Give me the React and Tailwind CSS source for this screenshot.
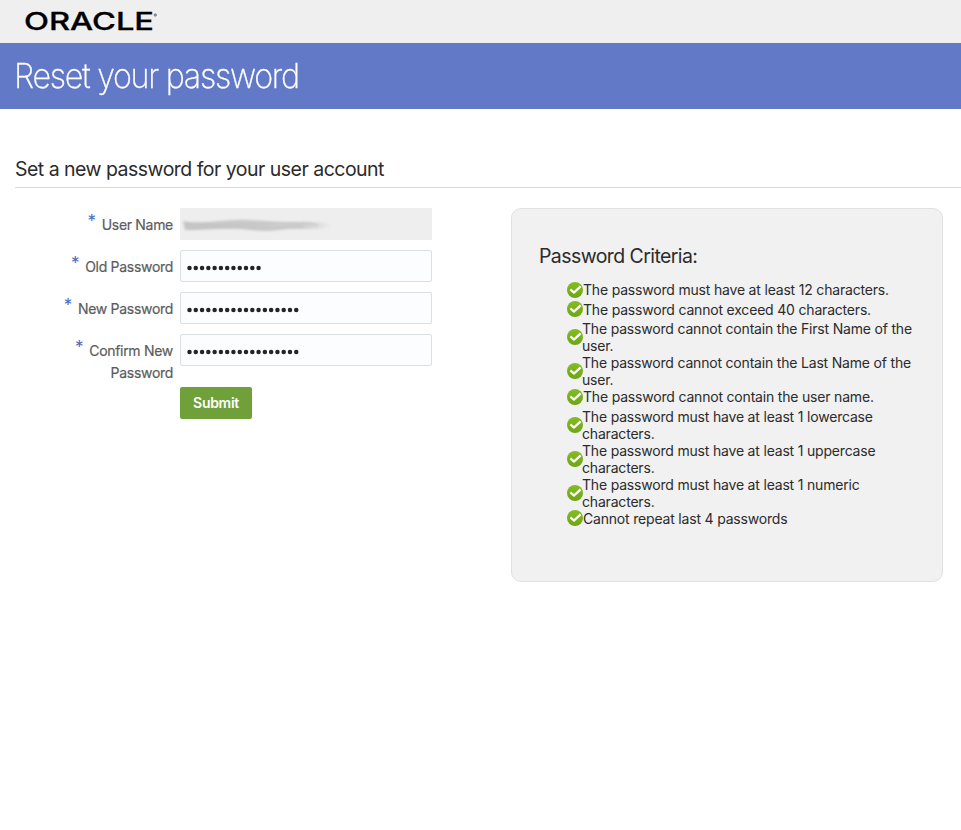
const criteria = [
  { lines: ['The password must have at least 12 characters.'] },
  { lines: ['The password cannot exceed 40 characters.'], raised: true },
  { lines: ['The password cannot contain the First Name of the', 'user.'] },
  { lines: ['The password cannot contain the Last Name of the', 'user.'] },
  { lines: ['The password cannot contain the user name.'], tight: true },
  { lines: ['The password must have at least 1 lowercase', 'characters.'] },
  { lines: ['The password must have at least 1 uppercase', 'characters.'] },
  { lines: ['The password must have at least 1 numeric', 'characters.'] },
  { lines: ['Cannot repeat last 4 passwords'], tight: true, raised: true },
];

function Check({ raised }) {
  return (
    <svg className={raised ? 'mb-[2px] block size-4 shrink-0' : 'block size-4 shrink-0'} viewBox="0 0 16 16">
      <defs>
        <linearGradient id="green" x1="0" y1="0" x2="0" y2="1">
          <stop offset="0" stopColor="#84bd22" />
          <stop offset="1" stopColor="#6ea514" />
        </linearGradient>
      </defs>
      <circle cx="8" cy="8" r="8" fill="url(#green)" />
      <path d="M3.4 7.4 7 10.5 13.6 4.4" fill="none" stroke="#fff" strokeWidth="2.3" />
    </svg>
  );
}

function Label({ children }) {
  return (
    <div className="flex w-[173px] shrink-0 justify-end gap-1.5 text-right text-[14px] leading-[22px] tracking-[-0.3px] text-[#5c5c5c]">
      <span className="mt-[2px] text-[17px] leading-[22px] text-[#4a69bd]">*</span>
      <span className="pt-[6px] [-webkit-text-stroke:0.2px_#5c5c5c]">{children}</span>
    </div>
  );
}

function Dots({ count }) {
  return (
    <div className="flex h-8 w-[252px] items-center rounded-[2px] border border-[#dadfe3] bg-[#fcfdfe] px-[6px] pt-[3px]">
      <svg className="block h-[6px] w-[120px]" viewBox="0 0 120 6" fill="#222428">
        {Array.from({ length: count }, (_, i) => (
          <circle key={i} cx={2.5 + i * 6.28} cy="3" r="2.25" />
        ))}
      </svg>
    </div>
  );
}

function Field({ label, children }) {
  return (
    <div className="flex h-8 gap-[7px]">
      <Label>{label}</Label>
      {children}
    </div>
  );
}

export default function App() {
  return (
    <div className="min-h-[830px] bg-white font-[Inter,sans-serif] text-[#2b2b2b]">
      <header className="h-[43px] bg-[#efefef] pl-6">
        <svg className="block h-[43px] w-[140px]" viewBox="0 0 140 43">
          <text x="0" y="30.3" fontSize="24" fontWeight="500" textLength="130" lengthAdjust="spacingAndGlyphs" fill="#000" stroke="#000" strokeWidth=".3">ORACLE</text>
          <circle cx="131.3" cy="15" r="1.2" fill="#999" stroke="#777" strokeWidth=".8" />
        </svg>
      </header>
      <div className="h-[66px] bg-[#6279c7] pl-[14px]">
        <h1 className="origin-left scale-x-[0.936] whitespace-nowrap text-[34.5px] font-extralight leading-[65px] tracking-[-1.4px] text-white [-webkit-text-stroke:0.3px_#fff]">Reset your password</h1>
      </div>
      <h2 className="ml-[15px] mt-[41px] h-[38px] whitespace-nowrap border-b border-[#d9dcdd] text-[19.5px] leading-[39px] tracking-[-0.52px]">
        Set a new password for your user account
      </h2>
      <div className="mt-5 flex">
        <form className="flex w-[511px] flex-col gap-[10px]">
          <Field label="User Name">
            <div className="flex h-8 w-[252px] items-center bg-[#eeeeef] pt-[6px]">
              <svg className="ml-[3px] block h-[18px] w-[152px] blur-[1px]" viewBox="0 0 152 18">
                <defs>
                  <linearGradient id="smear">
                    <stop offset="0" stopColor="#c6c6c7" />
                    <stop offset=".8" stopColor="#cfcfd0" />
                    <stop offset="1" stopColor="#cfcfd0" stopOpacity="0" />
                  </linearGradient>
                </defs>
                <path d="M0 3C14 6 30 3 52 2S90 5 112 4 140 4 150 7C140 12 124 11 110 11S88 15 68 12 20 12 2 12Z" fill="url(#smear)" />
                <path d="M2 6Q38 9 75 6T135 7M5 11Q38 9 65 10T120 8" fill="none" stroke="#bcbebe" strokeWidth=".9" />
              </svg>
            </div>
          </Field>
          <Field label="Old Password"><Dots count={12} /></Field>
          <Field label="New Password"><Dots count={18} /></Field>
          <Field label={<>Confirm New<br />Password</>}><Dots count={18} /></Field>
          <button type="button" className="ml-[180px] mt-[11px] h-8 w-[72px] rounded-[2px] bg-[#70a03a] pb-[2px] text-[14px] font-semibold tracking-[-0.3px] text-white">Submit</button>
        </form>
        <section className="h-[374px] w-[432px] rounded-[10px] border border-[#dfe1e2] bg-[#f1f1f1] pl-[27px] pt-[34px]">
          <h3 className="text-[19.5px] leading-[26px] tracking-[-0.58px]">Password Criteria:</h3>
          <ul className="ml-7 mt-[11px] text-[14px] leading-[17px] tracking-[-0.19px]">
            {criteria.map(({ lines, tight, raised }) => (
              <li
                key={lines[0]}
                className={lines.length > 1 ? 'flex h-[34px] items-center' : tight ? 'flex h-5 items-center pb-[3px]' : 'flex h-5 items-center pb-px'}
              >
                <Check raised={raised} />
                <div className={lines.length > 1 ? '-ml-px' : ''}>
                  {lines.map((line) => <div key={line} className="whitespace-nowrap">{line}</div>)}
                </div>
              </li>
            ))}
          </ul>
        </section>
      </div>
    </div>
  );
}
